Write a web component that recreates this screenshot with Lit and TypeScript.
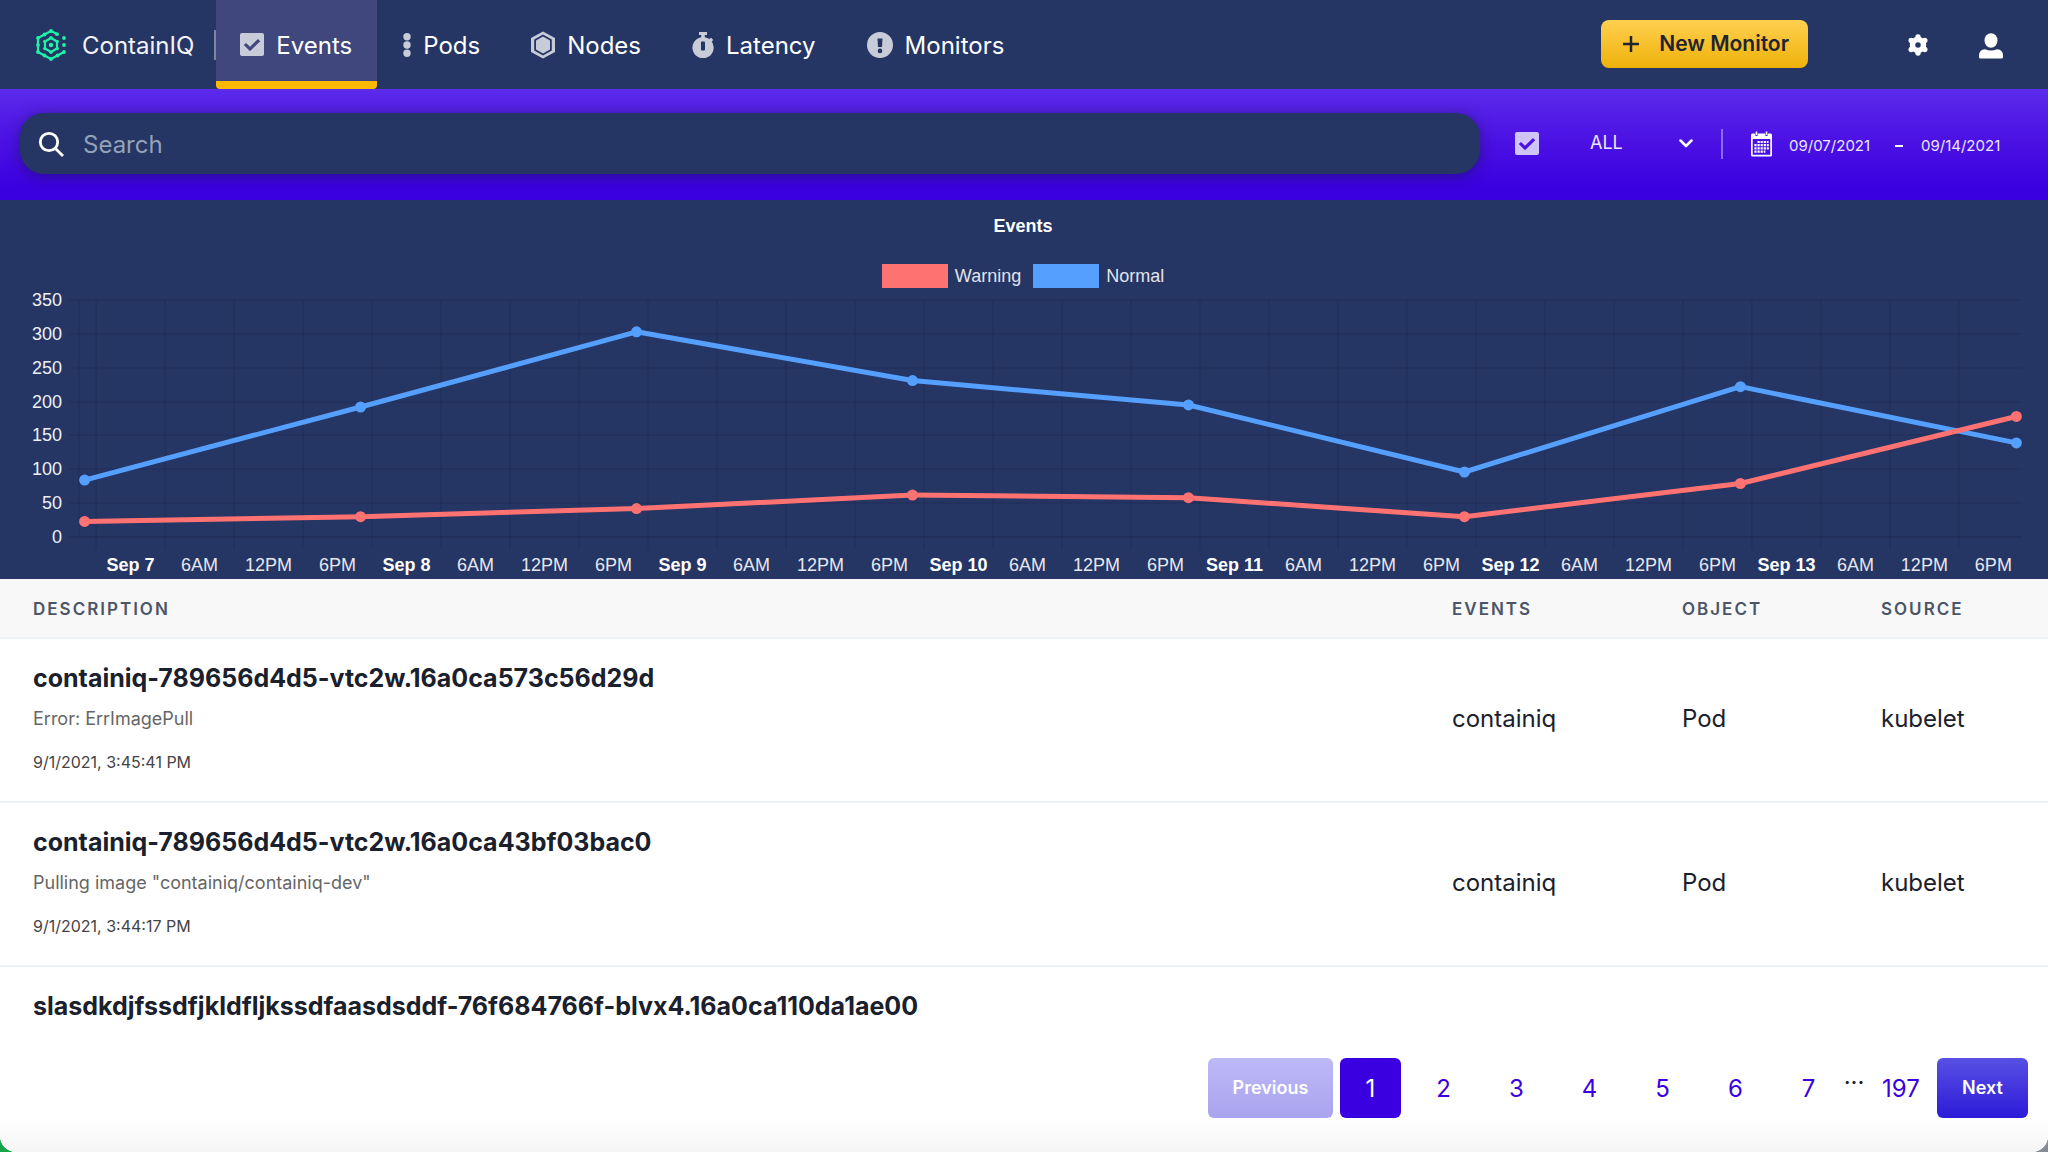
import { LitElement, html, css, svg, nothing } from "lit";
import { customElement, state } from "lit/decorators.js";

interface Series { name: string; cls: string; values: number[]; }
interface EventRow { title: string; message?: string; time?: string; ns?: string; object?: string; source?: string; }

const SERIES: Series[] = [
  { name: "Warning", cls: "warning", values: [23, 30, 42, 62, 58, 30, 79, 178] },
  { name: "Normal", cls: "normal", values: [84, 192, 303, 231, 195, 96, 222, 139] },
];

const ROWS: EventRow[] = [
  { title: "containiq-789656d4d5-vtc2w.16a0ca573c56d29d", message: "Error: ErrImagePull", time: "9/1/2021, 3:45:41 PM", ns: "containiq", object: "Pod", source: "kubelet" },
  { title: "containiq-789656d4d5-vtc2w.16a0ca43bf03bac0", message: 'Pulling image "containiq/containiq-dev"', time: "9/1/2021, 3:44:17 PM", ns: "containiq", object: "Pod", source: "kubelet" },
  { title: "slasdkdjfssdfjkldfljkssdfaasdsddf-76f684766f-blvx4.16a0ca110da1ae00" },
];

const checkBox = html`<svg class="icon" width="24" height="24" viewBox="0 0 24 24" aria-hidden="true">
  <path fill="currentColor" fill-rule="evenodd" d="M2 0h20a2 2 0 0 1 2 2v19a2 2 0 0 1-2 2H2a2 2 0 0 1-2-2V2a2 2 0 0 1 2-2zM10.700 17.600 20.200 8.200 18 6 10 13.700 6 9.900 3.800 12 9.300 17.600a1 1 0 0 0 1.400 0z"/></svg>`;

const icons = {
  events: checkBox,
  pods: html`<svg class="icon" width="8" height="24" viewBox="0 0 8 24" aria-hidden="true"><g fill="currentColor"><circle cx="4" cy="3.700" r="3.700"/><circle cx="4" cy="12" r="3.700"/><circle cx="4" cy="20.300" r="3.700"/></g></svg>`,
  nodes: html`<svg class="icon" width="24" height="28" viewBox="0 0 24 28" aria-hidden="true">
    <path fill="currentColor" fill-rule="evenodd" d="M12 .5 24 7v14l-12 6.500L0 21V7zM12 3.500 3.200 8.500v11L12 24.500l8.800-5v-11z"/>
    <path fill="currentColor" d="M12 5.500 19 9.500v9l-7 4-7-4v-9z"/></svg>`,
  latency: html`<svg class="icon" width="22" height="26" viewBox="0 0 22 26" aria-hidden="true">
    <path fill="currentColor" fill-rule="evenodd" d="M7 0h8v3h-2.200v2.200a10.800 10.800 0 0 1 4.600 1.900l1.700-1.400 2.200 2.200-1.600 1.600A10.600 10.600 0 1 1 9.200 5.200V3H7zM9.700 9.500a1 1 0 0 0-.7 1v7a1 1 0 0 0 1 1h2a1 1 0 0 0 1-1v-7a1 1 0 0 0-1-1z"/></svg>`,
  monitors: html`<svg class="icon" width="26" height="26" viewBox="0 0 26 26" aria-hidden="true">
    <path fill="currentColor" fill-rule="evenodd" d="M13 0a13 13 0 1 1 0 26 13 13 0 0 1 0-26zM10.500 6.500l.5 8.500h4l.5-8.500zM13 16.600a2.300 2.300 0 1 0 0 4.600 2.300 2.300 0 0 0 0-4.600z"/></svg>`,
};

@customElement("events-chart")
export class EventsChart extends LitElement {
  static styles = css`
    :host { display: block; background: #253564; color: #fff; font: 18px/20px "Liberation Sans", Arial, sans-serif; padding: 16px 26px 0 24px; }
    .title { margin: 0; font-size: 18px; line-height: 20px; text-align: center; }
    .legend { display: flex; justify-content: center; gap: 12px; margin-top: 28px; line-height: 24px; color: #e1e4ec; }
    .key { display: flex; align-items: center; gap: 7px; }
    .swatch { width: 66px; height: 24px; }
    .swatch.warning { background: #ff7272; }
    .swatch.normal { background: #559fff; }
    .plot { display: grid; grid-template-columns: 38px 1fr; column-gap: 17px; margin-top: 2px; }
    .yaxis { display: flex; flex-direction: column; justify-content: space-between; height: 257px; text-align: right; color: #eef0f5; }
    svg { display: block; width: 100%; height: 289px; overflow: visible; }
    .grid { stroke: rgba(0, 0, 0, 0.12); stroke-width: 1; }
    .axis { stroke: rgba(0, 0, 0, 0.2); stroke-width: 1; }
    .line { stroke-width: 5; stroke-linecap: round; }
    .line.warning { stroke: #ff7272; }
    .line.normal { stroke: #559fff; }
    .dot.warning { fill: #ff7272; }
    .dot.normal { fill: #559fff; }
    text { fill: #e6e8ef; text-anchor: middle; }
    .day { fill: #fff; font-weight: 700; }
  `;

  private y(v: number) { return 10 + ((350 - v) * 237) / 350; }
  private x(hours: number) { return `${0.88 + hours * 0.5918}%`; }

  render() {
    const ticks = [350, 300, 250, 200, 150, 100, 50, 0];
    const slots = Array.from({ length: 28 }, (_, i) => i);
    const drawn = [...SERIES].reverse();
    return html`
      <h2 class="title">Events</h2>
      <div class="legend">${SERIES.map((s) => html`<span class="key"><span class="swatch ${s.cls}"></span>${s.name}</span>`)}</div>
      <div class="plot">
        <div class="yaxis">${ticks.map((t) => html`<span>${t}</span>`)}</div>
        <svg role="img" aria-label="Warning and normal events per day">
          ${ticks.map((t) => svg`<line class=${t ? "grid" : "axis"} x1="-10" x2="100%" y1=${Math.round(this.y(t))} y2=${Math.round(this.y(t))}></line>`)}
          <line class="grid" x1="0" x2="0" y1="10" y2="247"></line>
          ${slots.map((i) => svg`<line class="grid" x1=${this.x(i * 6)} x2=${this.x(i * 6)} y1="10" y2="259"></line>`)}
          ${slots.map((i) => svg`<text class=${i % 4 ? "hour" : "day"} x=${this.x(i * 6 + 3)} y="281">${i % 4 ? ["", "6AM", "12PM", "6PM"][i % 4] : `Sep ${7 + i / 4}`}</text>`)}
          ${drawn.map((s) => s.values.slice(1).map((v, i) => svg`<line class="line ${s.cls}" x1=${this.x(i * 24 - 1)} y1=${this.y(s.values[i])} x2=${this.x(i * 24 + 23)} y2=${this.y(v)}></line>`))}
          ${drawn.map((s) => s.values.map((v, i) => svg`<circle class="dot ${s.cls}" cx=${this.x(i * 24 - 1)} cy=${this.y(v)} r="5.500"></circle>`))}
        </svg>
      </div>`;
  }
}

@customElement("app-root")
export class AppRoot extends LitElement {
  @state() private page = 1;

  static styles = css`
    :host { display: block; min-height: 100vh; background: linear-gradient(90deg, #17a34a 50%, #868b94 50%); font-family: Inter, "Liberation Sans", sans-serif; color: #1a202c; }
    * { box-sizing: border-box; }
    a { color: inherit; text-decoration: none; }
    button, input, select { font: inherit; color: inherit; border: 0; margin: 0; padding: 0; background: none; }
    svg { display: block; flex: none; }
    .window { display: flex; flex-direction: column; min-height: 100vh; background: #fff; border-radius: 0 0 16px 16px; overflow: hidden; }

    .topbar { display: flex; align-items: center; height: 89px; padding: 0 45px 0 36px; background: #253564; color: #fff; font-size: 24px; }
    .brand { display: flex; align-items: center; gap: 16px; color: #f2f4f8; }
    .rule { width: 2px; height: 30px; margin-left: 20px; background: #7c86a2; }
    .tabs { display: flex; align-self: stretch; gap: 2px; }
    .tab { display: flex; align-items: center; gap: 12px; padding: 0 25px 0 24px; border-bottom: 8px solid transparent; border-top: 8px solid transparent; }
    .tab.active { background: #3f477c; border-bottom-color: #ffb900; border-top-color: #3f477c; border-radius: 0 0 4px 4px; }
    .tab .icon { color: #c8ccd9; }
    .tab span, .brand span { padding-top: 2px; }
    .actions { display: flex; align-items: center; margin-left: auto; }
    .new { display: flex; align-items: center; gap: 19px; height: 48px; padding: 0 19px 0 21px; margin: 0 100px 2px 0; border-radius: 8px; background: linear-gradient(#ffd050, #efb20a); color: #1f2530; font-size: 21px; font-weight: 600; }
    .round { display: block; margin-right: 51px; }
    .round:last-child { margin-right: 0; padding-top: 2px; }

    .filters { display: flex; align-items: center; height: 111px; padding: 0 43px 2px 20px; background: linear-gradient(#5b2aea, #4c12e4 45%, #3b00df 90%); color: #fff; }
    .search { display: flex; align-items: center; flex: 1; gap: 19px; height: 61px; padding: 0 20px 0 18px; border-radius: 24px; background: #253564; box-shadow: 0 2px 14px rgba(20, 20, 60, 0.5); }
    .search input { flex: 1; padding-top: 2px; font-size: 24px; outline: none; }
    .search input::placeholder { color: #94a2b8; opacity: 1; }
    .kind { display: flex; align-items: center; margin-left: 35px; }
    .kind .icon { color: #cfc3f8; }
    .kind select { appearance: none; width: 89px; margin-left: 51px; padding-bottom: 2px; font-size: 18px; line-height: 24px; color: #ece8ff; }
    .kind option { color: #1a202c; }
    .split { width: 2px; height: 30px; margin: 0 28px; background: #8d6cf0; }
    .range { display: flex; align-items: center; font-size: 15px; }
    .dates { display: flex; align-items: center; padding-top: 4px; }
    .dates input { width: 84px; color: #ece8ff; line-height: 20px; }
    .cal { margin-right: 17px; }
    .dash { width: 8px; height: 2px; margin: 0 18px 0 22px; background: #fff; }

    table { width: 100%; border-collapse: collapse; table-layout: fixed; }
    th { height: 59px; padding: 2px 0 0 33px; text-align: left; background: #f8f8f8; color: #4a5568; font-size: 17px; line-height: 24px; font-weight: 600; letter-spacing: 2px; text-transform: uppercase; border-bottom: 2px solid #edf2f7; }
    td { padding: 20px 0 18px 33px; border-bottom: 2px solid #edf2f7; font-size: 24px; line-height: 32px; }
    .c-events { width: 230px; }
    .c-object { width: 199px; }
    .c-source { width: 167px; }
    th + th { padding-left: 0; }
    td + td { padding: 18px 0 20px; }
    tr:last-child td { border-bottom: 0; padding-bottom: 0; }
    .name { margin: 0; line-height: 38px; font-size: 25px; font-weight: 700; }
    .message { margin: 0; line-height: 44px; font-size: 18px; color: #666; }
    .time { display: block; line-height: 42px; font-size: 16px; color: #444; }

    .pager { display: flex; justify-content: flex-end; align-items: flex-start; margin-top: auto; padding: 20px 20px 34px; background: linear-gradient(#fff 70%, #f5f5f5); color: #3b00df; font-size: 24px; }
    .step { height: 60px; padding-bottom: 2px; border-radius: 6px; font-size: 18px; font-weight: 600; color: #fff; }
    .prev { width: 125px; margin-right: 7px; background: linear-gradient(#bdb9f6, #aaa3ef); }
    .next { width: 91px; background: linear-gradient(#5850e4, #2c1bd8); }
    .num { width: 61px; height: 60px; margin-right: 12px; border-radius: 6px; }
    .num.current { background: #3b00df; color: #fff; }
    .num.last { width: 64px; margin: 0 4px 0 0; }
    .more { width: 30px; line-height: 50px; font-size: 24px; color: #1a202c; text-align: center; }
    .num.edge { margin-right: 0; }
  `;

  private tab(label: string, icon: unknown, active = false) {
    return html`<a class="tab ${active ? "active" : ""}" href="#${label.toLowerCase()}">${icon}<span>${label}</span></a>`;
  }

  render() {
    return html`
      <div class="window">
        <header class="topbar">
          <a class="brand" href="#home">
            <svg width="30" height="32" viewBox="0 0 30 32" fill="none" stroke="#1df2a8" stroke-width="2.200" stroke-linejoin="round" aria-hidden="true">
              <path d="M21 5 15 2 2 9v14l13 7 13-7"/>
              <path d="M15 9 21 12.500v7L15 23l-6-3.500v-7z"/>
              <g fill="#1df2a8" stroke="none">
                <circle cx="15" cy="2" r="1.900"/><circle cx="21" cy="5.200" r="1.900"/><circle cx="8.500" cy="5.500" r="1.900"/><circle cx="2" cy="9" r="1.900"/><circle cx="2" cy="16" r="1.900"/><circle cx="2" cy="23" r="1.900"/><circle cx="8.500" cy="26.500" r="1.900"/><circle cx="15" cy="30" r="1.900"/><circle cx="21.500" cy="26.500" r="1.900"/><circle cx="28" cy="23" r="1.900"/><circle cx="28" cy="9" r="1.900"/><circle cx="28" cy="16" r="1.900"/>
                <circle cx="15" cy="16" r="2.200"/><circle cx="15" cy="8.700" r="1.700"/><circle cx="21.200" cy="12.400" r="1.700"/><circle cx="21.200" cy="19.600" r="1.700"/><circle cx="15" cy="23.300" r="1.700"/><circle cx="8.800" cy="19.600" r="1.700"/><circle cx="8.800" cy="12.400" r="1.700"/>
              </g>
            </svg>
            <span>ContainIQ</span>
          </a>
          <span class="rule"></span>
          <nav class="tabs">
            ${this.tab("Events", icons.events, true)}
            ${this.tab("Pods", icons.pods)}
            ${this.tab("Nodes", icons.nodes)}
            ${this.tab("Latency", icons.latency)}
            ${this.tab("Monitors", icons.monitors)}
          </nav>
          <div class="actions">
            <button class="new" type="button">
              <svg width="18" height="18" viewBox="0 0 18 18" stroke="#1f2530" stroke-width="2.500" aria-hidden="true"><path d="M9 1v16M1 9h16"/></svg>
              New Monitor
            </button>
            <button class="round" type="button" aria-label="Settings">
              <svg width="20" height="22" viewBox="0 0 20 22" aria-hidden="true">
                <g fill="#fff"><circle cx="10" cy="3" r="2.700"/><circle cx="10" cy="19" r="2.700"/><circle cx="3.200" cy="6.500" r="2.700"/><circle cx="16.800" cy="6.500" r="2.700"/><circle cx="3.200" cy="15.500" r="2.700"/><circle cx="16.800" cy="15.500" r="2.700"/></g>
                <circle cx="10" cy="11" r="5.500" fill="none" stroke="#fff" stroke-width="5.500"/>
              </svg>
            </button>
            <button class="round" type="button" aria-label="Account">
              <svg width="24" height="26" viewBox="0 0 24 26" aria-hidden="true"><g fill="#fff"><ellipse cx="12" cy="7.500" rx="6.500" ry="7.300"/><path d="M0 24v-1.500Q0 16.500 6 16.200q6 2.400 12 0 6 .3 6 6.300V24q0 1.500-1.500 1.500h-21Q0 25.500 0 24z"/></g></svg>
            </button>
          </div>
        </header>

        <section class="filters">
          <div class="search">
            <svg width="26" height="26" viewBox="0 0 26 26" fill="none" stroke="#fff" stroke-width="2.800" aria-hidden="true"><circle cx="11" cy="11" r="8.700"/><path d="M17.200 17.200 25 25"/></svg>
            <input type="text" placeholder="Search" aria-label="Search" />
          </div>
          <div class="kind">
            ${icons.events}
            <select aria-label="Event type"><option>ALL</option><option>Warning</option><option>Normal</option></select>
            <svg width="14" height="9" viewBox="0 0 14 9" fill="none" stroke="#fff" stroke-width="2.500" stroke-linecap="round" stroke-linejoin="round" aria-hidden="true"><path d="M1.500 1.500 7 7l5.500-5.500"/></svg>
          </div>
          <span class="split"></span>
          <div class="range">
            <svg class="cal" width="21" height="26" viewBox="0 0 21 26" aria-hidden="true">
              <path fill="#fff" fill-rule="evenodd" d="M1.500 2.500H4.300V4.500q1.200 1 2.400 0v-2h7.600v2q1.200 1 2.400 0v-2h2.800A1.500 1.500 0 0 1 21 4v20a1.500 1.500 0 0 1-1.500 1.500h-18A1.500 1.500 0 0 1 0 24V4A1.500 1.500 0 0 1 1.500 2.500zM1.700 8v15.800h17.600V8z"/>
              <path stroke="#fff" stroke-width="1.600" d="M5.500.5v3.500M15.500.5v3.500"/>
              <path stroke="#fff" stroke-width="2.200" stroke-dasharray="2.200 .9" d="M6.500 11h11M3.400 14.200h14.400M3.400 17.400h14.400M3.400 20.600h11"/>
            </svg>
            <span class="dates">
              <input type="text" .value=${"09/07/2021"} aria-label="Start date" />
              <span class="dash"></span>
              <input type="text" .value=${"09/14/2021"} aria-label="End date" />
            </span>
          </div>
        </section>

        <events-chart></events-chart>

        <table>
          <thead>
            <tr><th>Description</th><th class="c-events">Events</th><th class="c-object">Object</th><th class="c-source">Source</th></tr>
          </thead>
          <tbody>
            ${ROWS.map((r) => html`<tr>
              <td><h3 class="name">${r.title}</h3>
                ${r.message ? html`<p class="message">${r.message}</p><time class="time">${r.time}</time>` : nothing}</td>
              <td>${r.ns}</td><td>${r.object}</td><td>${r.source}</td>
            </tr>`)}
          </tbody>
        </table>

        <nav class="pager" aria-label="Pages">
          <button class="step prev" type="button">Previous</button>
          ${[1, 2, 3, 4, 5, 6, 7].map((n) => html`<button type="button" class="num ${n === this.page ? "current" : ""} ${n === 7 ? "edge" : ""}" @click=${() => (this.page = n)}>${n}</button>`)}
          <span class="more">···</span>
          <button type="button" class="num last">197</button>
          <button class="step next" type="button">Next</button>
        </nav>
      </div>`;
  }
}
